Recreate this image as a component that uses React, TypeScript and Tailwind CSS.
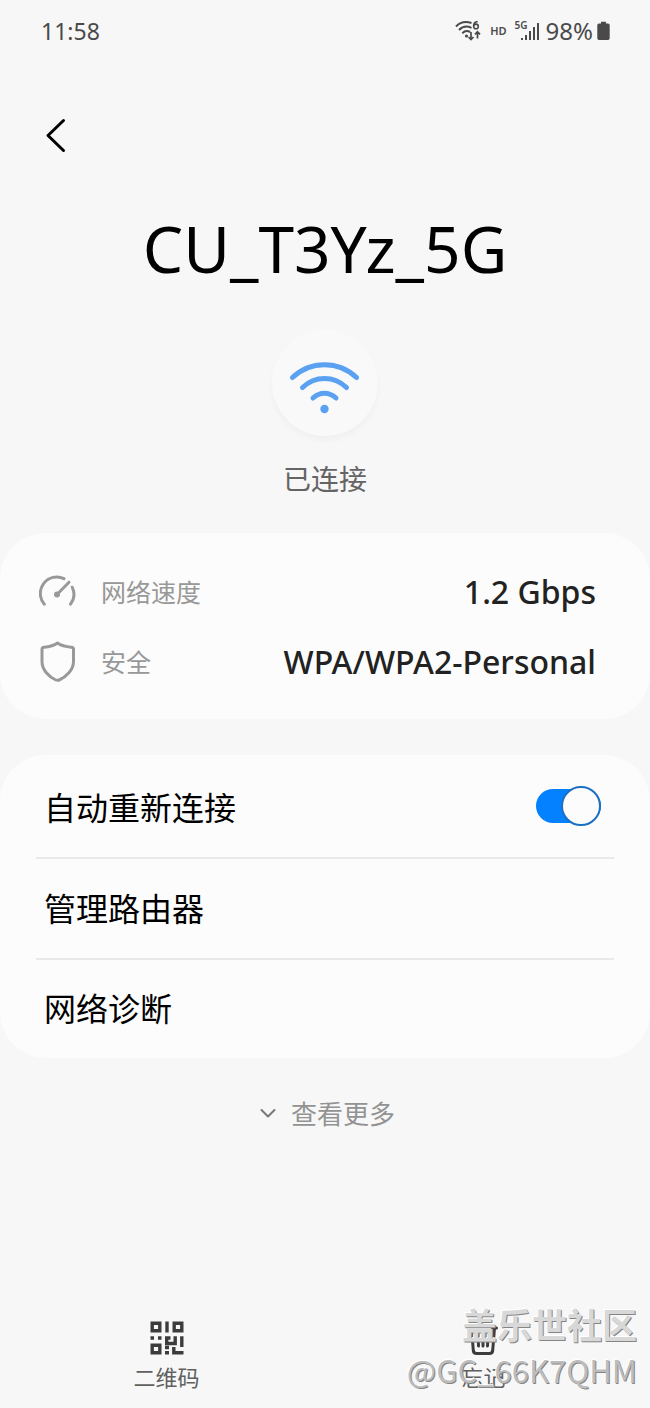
import { useState, type ReactNode } from 'react';

function WifiStatusIcon() {
  return (
    <svg width="27" height="22" viewBox="0 0 27 22" fill="none" stroke="#4a4a4a" strokeWidth="2" aria-hidden="true">
      <path d="M1 6.5C5 2.2 11 1.2 16.5 3" />
      <path d="M4 10C7.5 6.4 12 5.8 16.5 7.8" />
      <path d="M7.3 13.2C9.5 11 12.5 10.6 15.1 12" />
      <circle cx="11.5" cy="16" r="1.6" fill="#4a4a4a" stroke="none" />
      <path d="M22.6 1.6C19.6 1.8 18.6 3.8 18.6 6.2" strokeWidth="1.6" />
      <circle cx="21" cy="6.4" r="2.3" strokeWidth="1.6" />
      <path d="M16 12V19.5M13.5 17L16 19.6L18.5 17" strokeWidth="1.7" />
      <path d="M22.5 18.5V12M20 14.4L22.5 11.8L25 14.4" strokeWidth="1.7" />
    </svg>
  );
}

function SignalIcon() {
  return (
    <svg width="24" height="22" viewBox="0 0 24 22" fill="#4a4a4a" aria-hidden="true">
      <rect x="5" y="18" width="2" height="2" />
      <rect x="9" y="15" width="2" height="5" />
      <rect x="13" y="11" width="2" height="9" />
      <rect x="17" y="7" width="2" height="13" />
      <rect x="21" y="3" width="2" height="17" />
    </svg>
  );
}

function BatteryIcon() {
  return (
    <svg width="13" height="20" viewBox="0 0 13 20" fill="#4a4a4a" aria-hidden="true">
      <path d="M4 0.8H9V2.5H11A1.8 1.8 0 0 1 12.7 4.3V17.2A1.8 1.8 0 0 1 11 19H2A1.8 1.8 0 0 1 0.3 17.2V4.3A1.8 1.8 0 0 1 2 2.5H4Z" />
    </svg>
  );
}

function WifiIcon() {
  return (
    <svg width="72" height="56" viewBox="0 0 72 56" fill="none" stroke="#5aa1f2" strokeWidth="5" strokeLinecap="round" aria-hidden="true">
      <path d="M3.5 18.5C21.5 1.5 49.5 1.5 67.5 18.5" />
      <path d="M13.5 28.5C26 16.5 45 16.5 57.5 28.5" />
      <path d="M24 39C31 32.5 40 32.5 47 39" />
      <circle cx="35.5" cy="50" r="4.2" fill="#5aa1f2" stroke="none" />
    </svg>
  );
}

function SpeedIcon() {
  return (
    <svg width="38" height="40" viewBox="0 1 38 40" fill="none" stroke="#999" strokeWidth="3" strokeLinecap="round" aria-hidden="true">
      <path d="M5.3 33.2A16.5 16.5 0 0 1 25 7.6" />
      <path d="M33.2 16.2A16.5 16.5 0 0 1 31.5 33.2" />
      <path d="M18 23.5L30 11.2" />
      <circle cx="18" cy="23.5" r="3" fill="#999" stroke="none" />
    </svg>
  );
}

function ShieldIcon() {
  return (
    <svg width="38" height="42" viewBox="0 0 38 42" fill="none" stroke="#999" strokeWidth="3" strokeLinejoin="round" aria-hidden="true">
      <path d="M18.5 2C14.5 4.8 9.5 5.8 5.2 6.2C4 6.3 3 7 3 8.2V20.5C3 29 10 36 16.8 39C18 39.5 19 39.5 20.2 39C27 36 34.5 29 34.5 20.5V8.2C34.5 7 33.5 6.3 32.3 6.2C28 5.8 22.5 4.8 18.5 2Z" />
    </svg>
  );
}

function QrIcon() {
  return (
    <svg width="34" height="34" viewBox="0 0 34 34" fill="none" stroke="#3c3c3c" strokeWidth="3.4" aria-hidden="true">
      <path d="M2.2 2.2H9.8V9.8H2.2ZM24.2 2.2H31.8V9.8H24.2ZM2.2 24.2H9.8V31.8H2.2Z" />
      <path d="M17 0.5V11.5M0.5 17H4M8 17H11.5M15 17H20.5M16.7 15.2V22.5H25.2V15.2M31.8 15.2V26M15 31.8H19M23.8 26V31.8H33.5M19 26.5H15" />
    </svg>
  );
}

function TrashIcon() {
  return (
    <svg width="34" height="34" viewBox="0 0 34 34" fill="none" stroke="#3c3c3c" strokeWidth="3" strokeLinecap="round" strokeLinejoin="round" aria-hidden="true">
      <path d="M2.5 7H29.5M11 7V2.5H21V7" />
      <path d="M4.5 7L6.3 29.5C6.5 31.4 7.7 32.5 9.5 32.5H22.5C24.3 32.5 25.5 31.4 25.7 29.5L27.5 7" />
      <path d="M11 13L11.5 25M16 13V25M21 13L20.5 25" />
    </svg>
  );
}

function InfoRow({ icon, label, value }: { icon: ReactNode; label: string; value: string }) {
  return (
    <div className="flex h-[70px] items-center">
      {icon}
      <dt className="ml-6 text-[25px] leading-8 text-[#989898]">{label}</dt>
      <dd className="ml-auto text-[32px] leading-8 font-medium text-[#222]">{value}</dd>
    </div>
  );
}

function NavButton({ icon, label }: { icon: ReactNode; label: string }) {
  return (
    <button type="button" className="flex flex-1 flex-col items-center gap-1.5">
      {icon}
      <span className="text-[22px] leading-8 text-[#606060]">{label}</span>
    </button>
  );
}

export default function App() {
  const [autoReconnect, setAutoReconnect] = useState(true);

  return (
    <div className="relative flex min-h-screen flex-col bg-[#f7f7f7] font-['Noto_Sans','Noto_Sans_CJK_SC',sans-serif] text-black">
      <div className="flex h-[62px] items-center justify-between pr-10 pl-[41px] text-[#4a4a4a]">
        <span className="text-[23px]">11:58</span>
        <div className="flex items-center">
          <WifiStatusIcon />
          <span className="ml-2 text-[11px] font-semibold">HD</span>
          <span className="ml-2 flex items-start">
            <span className="-mr-3 text-[10px] leading-[10px] font-semibold">5G</span>
            <SignalIcon />
          </span>
          <span className="ml-1.5 text-2xl">98%</span>
          <span className="ml-1">
            <BatteryIcon />
          </span>
        </div>
      </div>

      <header className="px-9 pt-[53px]">
        <button type="button" aria-label="返回" className="flex size-10 items-center justify-center">
          <svg width="40" height="40" viewBox="0 0 40 40" fill="none" stroke="#000" strokeWidth="3" strokeLinecap="round" strokeLinejoin="round">
            <path d="M27.5 5.5L12 20.5L27.5 35.5" />
          </svg>
        </button>
      </header>

      <main className="flex flex-col items-center">
        <h1 className="mt-[54px] text-[64px] leading-[80px]">CU_T3Yz_5G</h1>
        <div className="mt-[41px] flex size-[106px] items-center justify-center rounded-full bg-[#f9f9f9] pt-2 shadow-[0_4px_6px_rgba(0,0,0,0.03)]">
          <WifiIcon />
        </div>
        <p className="mt-[23px] text-[28px] leading-10 text-[#646464]">已连接</p>

        <dl className="mt-[34px] w-full rounded-[46px] bg-[#fcfcfc] pt-6 pr-[54px] pb-[22px] pl-[39px]">
          <InfoRow icon={<SpeedIcon />} label="网络速度" value="1.2 Gbps" />
          <InfoRow icon={<ShieldIcon />} label="安全" value="WPA/WPA2-Personal" />
        </dl>

        <section className="mt-9 w-full divide-y-2 divide-[#e9e9e9] rounded-[46px] bg-[#fcfcfc] px-9 pt-[3px] text-[32px]">
          <label className="flex h-[101px] items-center justify-between pr-[13px] pl-2">
            自动重新连接
            <input
              type="checkbox"
              role="switch"
              checked={autoReconnect}
              onChange={(e) => setAutoReconnect(e.target.checked)}
              className="mb-1 flex h-[34px] w-[65px] appearance-none items-center rounded-full bg-[#b5b5b5] before:size-10 before:shrink-0 before:rounded-full before:border-2 before:border-[#8f8f8f] before:bg-[#fcfcfc] checked:justify-end checked:bg-[#0381fe] checked:before:border-[#1b70c4]"
            />
          </label>
          <button type="button" className="flex h-[101px] w-full items-center pl-2">
            管理路由器
          </button>
          <button type="button" className="flex h-[98px] w-full items-center pl-2">
            网络诊断
          </button>
        </section>

        <button type="button" className="mt-9 flex items-center gap-3.5 pl-1 text-[26px] leading-10 text-[#939393]">
          <svg width="18" height="18" viewBox="0 0 18 18" fill="none" stroke="#777" strokeWidth="2" strokeLinecap="round" strokeLinejoin="round" aria-hidden="true">
            <path d="M2.5 5L9 11.5L15.5 5" />
          </svg>
          查看更多
        </button>
      </main>

      <nav className="mt-auto flex px-2 pb-[15px]">
        <NavButton icon={<QrIcon />} label="二维码" />
        <NavButton icon={<TrashIcon />} label="忘记" />
      </nav>

      {/* Community stamp laid over the bottom bar */}
      <div className="pointer-events-none absolute right-[13px] bottom-[15px] flex flex-col items-end font-['Noto_Sans_CJK_SC',sans-serif] whitespace-nowrap">
        <span className="text-[35px] leading-[46px] font-bold text-[#d8d8d8] [text-shadow:1px_1px_0_#858585,-1px_-1px_0_#fff]">
          盖乐世社区
        </span>
        <span className="text-[31px] leading-[46px] text-[#bdbdbd] [text-shadow:1px_1px_0_#858585,-1px_-1px_0_#fff]">
          @GC_66K7QHM
        </span>
      </div>
    </div>
  );
}
